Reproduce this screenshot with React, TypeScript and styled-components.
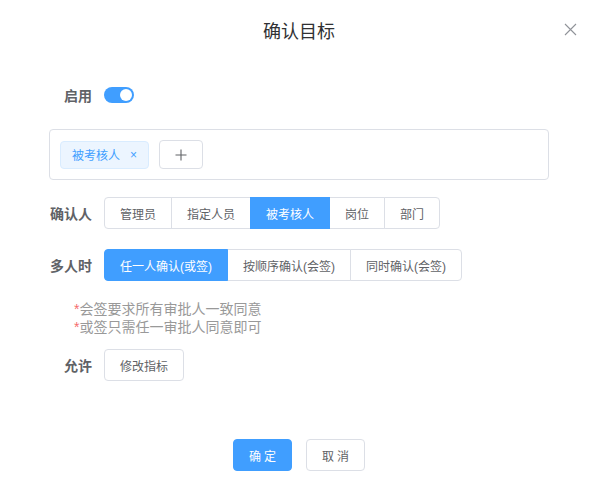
import styled, { createGlobalStyle } from 'styled-components';

const GlobalStyle = createGlobalStyle`
  * { box-sizing: border-box; }
  html, body {
    margin: 0;
    padding: 0;
    background: #ffffff;
    font-family: "Helvetica Neue", "Liberation Sans", "Noto Sans CJK SC", sans-serif;
  }
`;

const Dialog = styled.div`
  width: 598px;
  height: 489px;
  background: #ffffff;
  border-radius: 2px;
  display: flex;
  flex-direction: column;
  position: relative;
`;

const Header = styled.div`
  padding: 20px 20px 10px;
  text-align: center;
`;

const Title = styled.span`
  font-size: 18px;
  line-height: 24px;
  color: #303133;
`;

const CloseButton = styled.button`
  position: absolute;
  top: 21px;
  right: 20px;
  width: 16px;
  height: 16px;
  padding: 0;
  border: none;
  background: transparent;
  cursor: pointer;
  display: flex;
  align-items: center;
  justify-content: center;
`;

const Body = styled.div`
  padding: 25px 49px 0;
  display: flex;
  flex-direction: column;
`;

const FormRow = styled.div<{ $mt?: number }>`
  display: flex;
  align-items: center;
  margin-top: ${(p) => p.$mt ?? 0}px;
  min-height: 32px;
`;

const Label = styled.div`
  width: 43px;
  margin-right: 12px;
  text-align: right;
  font-size: 14px;
  font-weight: 700;
  color: #606266;
  white-space: nowrap;
`;

const Switch = styled.div<{ $on: boolean }>`
  width: 30px;
  height: 16px;
  border-radius: 8px;
  background: ${(p) => (p.$on ? '#409eff' : '#dcdfe6')};
  position: relative;
  cursor: pointer;
  &::after {
    content: '';
    position: absolute;
    top: 2px;
    left: ${(p) => (p.$on ? '16px' : '2px')};
    width: 12px;
    height: 12px;
    border-radius: 50%;
    background: #ffffff;
  }
`;

const TagBox = styled.div`
  margin-top: 18px;
  border: 1px solid #dcdfe6;
  border-radius: 4px;
  padding: 10px;
  display: flex;
  align-items: center;
  gap: 10px;
`;

const Tag = styled.span`
  display: inline-flex;
  align-items: center;
  height: 28px;
  padding: 0 11px;
  background: #ecf5ff;
  border: 1px solid #d9ecff;
  border-radius: 4px;
  color: #409eff;
  font-size: 12px;
  gap: 10px;
`;

const TagClose = styled.span`
  font-size: 12px;
  line-height: 1;
  color: #409eff;
  cursor: pointer;
`;

const ButtonGroup = styled.div`
  display: flex;
`;

const Button = styled.button<{ $active?: boolean; $primary?: boolean }>`
  height: 32px;
  padding: 0 15px;
  font-family: inherit;
  font-size: 12px;
  white-space: nowrap;
  border: 1px solid ${(p) => (p.$active || p.$primary ? '#409eff' : '#dcdfe6')};
  background: ${(p) => (p.$active || p.$primary ? '#409eff' : '#ffffff')};
  color: ${(p) => (p.$active || p.$primary ? '#ffffff' : '#606266')};
  border-radius: 4px;
  cursor: pointer;
  ${ButtonGroup} > & {
    border-radius: 0;
    margin-left: -1px;
  }
  ${ButtonGroup} > &:first-child {
    border-radius: 4px 0 0 4px;
    margin-left: 0;
  }
  ${ButtonGroup} > &:last-child {
    border-radius: 0 4px 4px 0;
  }
  ${ButtonGroup} > &[data-active='true'] {
    position: relative;
    z-index: 1;
  }
`;

const IconButton = styled(Button)`
  width: 44px;
  height: 29px;
  padding: 0;
  display: inline-flex;
  align-items: center;
  justify-content: center;
`;

const Notes = styled.div`
  margin-top: 19px;
  margin-left: 25px;
  font-size: 14px;
  line-height: 18px;
  color: #999999;
`;

const Star = styled.span`
  color: #f56c6c;
`;

const Footer = styled.div`
  margin-top: auto;
  padding: 0 0 18px;
  display: flex;
  justify-content: center;
  gap: 14px;
`;

const FooterButton = styled(Button)`
  width: 59px;
  padding: 0;
  letter-spacing: 3px;
  text-indent: 3px;
`;

const approvers = ['管理员', '指定人员', '被考核人', '岗位', '部门'];
const modes = ['任一人确认(或签)', '按顺序确认(会签)', '同时确认(会签)'];

export default function App() {
  return (
    <>
      <GlobalStyle />
      <Dialog>
        <Header>
          <Title>确认目标</Title>
        </Header>
        <CloseButton aria-label="close">
          <svg width="13" height="13" viewBox="0 0 13 13">
            <path d="M1 1L12 12M12 1L1 12" stroke="#909399" strokeWidth="1.1" fill="none" />
          </svg>
        </CloseButton>
        <Body>
          <FormRow>
            <Label>启用</Label>
            <Switch $on />
          </FormRow>
          <TagBox>
            <Tag>
              被考核人
              <TagClose>×</TagClose>
            </Tag>
            <IconButton>
              <svg width="12" height="12" viewBox="0 0 12 12">
                <path d="M6 0.5V11.5M0.5 6H11.5" stroke="#606266" strokeWidth="1.1" fill="none" />
              </svg>
            </IconButton>
          </TagBox>
          <FormRow $mt={17}>
            <Label>确认人</Label>
            <ButtonGroup>
              {approvers.map((a) => (
                <Button key={a} $active={a === '被考核人'} data-active={a === '被考核人'}>
                  {a}
                </Button>
              ))}
            </ButtonGroup>
          </FormRow>
          <FormRow $mt={20}>
            <Label>多人时</Label>
            <ButtonGroup>
              {modes.map((m, i) => (
                <Button key={m} $active={i === 0} data-active={i === 0}>
                  {m}
                </Button>
              ))}
            </ButtonGroup>
          </FormRow>
          <Notes>
            <div>
              <Star>*</Star>会签要求所有审批人一致同意
            </div>
            <div>
              <Star>*</Star>或签只需任一审批人同意即可
            </div>
          </Notes>
          <FormRow $mt={13}>
            <Label>允许</Label>
            <Button>修改指标</Button>
          </FormRow>
        </Body>
        <Footer>
          <FooterButton $primary>确定</FooterButton>
          <FooterButton>取消</FooterButton>
        </Footer>
      </Dialog>
    </>
  );
}
